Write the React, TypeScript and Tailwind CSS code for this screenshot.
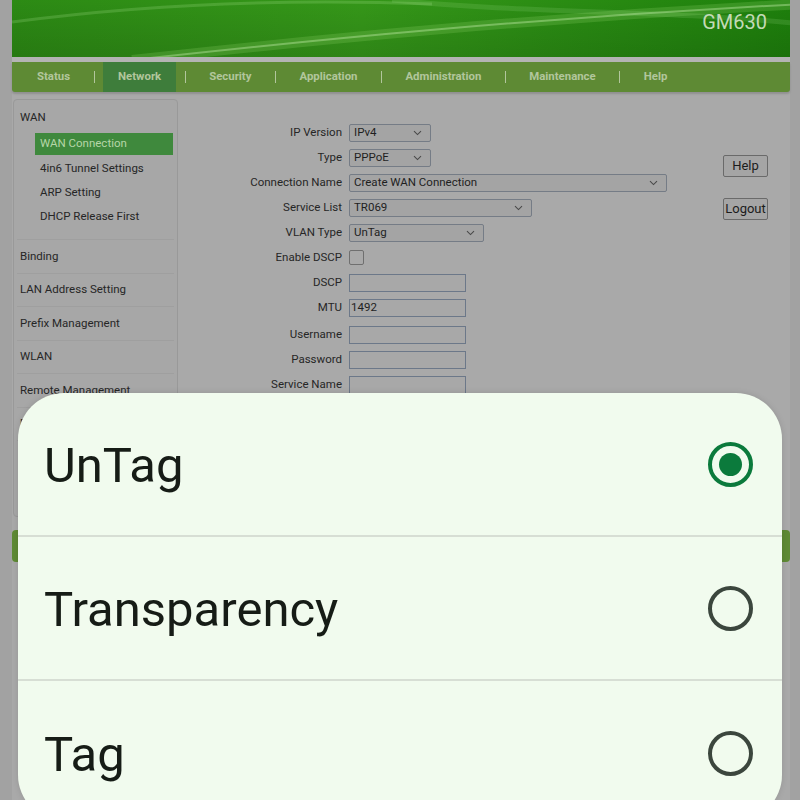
import React from 'react';

const navItems = ['Status', 'Network', 'Security', 'Application', 'Administration', 'Maintenance', 'Help'];

const sideGroups = ['Binding', 'LAN Address Setting', 'Prefix Management', 'WLAN', 'Remote Management', 'Diagnosis'];

const vlanOptions = ['UnTag', 'Transparency', 'Tag'];

function Chevron() {
  return (
    <svg width="9" height="6" viewBox="0 0 9 6" className="shrink-0">
      <path d="M1 1.2 L4.5 4.6 L8 1.2" fill="none" stroke="#4a4a4a" strokeWidth="1.1" />
    </svg>
  );
}

function Select({ value, width }: { value: string; width: string }) {
  return (
    <div className={`flex h-[18px] items-center justify-between rounded-[2px] border border-[#757c86] bg-[#a4a4a4] pl-[4px] pr-[8px] text-[11.5px] text-[#1f1f1f] ${width}`}>
      <span>{value}</span>
      <Chevron />
    </div>
  );
}

function Input({ value }: { value?: string }) {
  return (
    <div className="flex h-[18px] w-[117px] items-center border border-[#6c7889] bg-[#a8a8a8] pl-[1px] text-[11.5px] text-[#1f1f1f]">
      {value}
    </div>
  );
}

function Row({ label, children, extra }: { label: string; children: React.ReactNode; extra?: string }) {
  return (
    <div className={`flex h-[25px] items-center ${extra ?? ''}`}>
      <div className="w-[171px] pr-[7px] text-right text-[11.5px] text-[#262626]">{label}</div>
      {children}
    </div>
  );
}

function Radio({ checked }: { checked: boolean }) {
  return (
    <svg width="47" height="47" viewBox="0 0 47 47">
      <circle cx="23.5" cy="23.5" r="20.5" fill="none" stroke={checked ? '#0b7a3c' : '#3b463d'} strokeWidth="4" />
      {checked && <circle cx="23.5" cy="23.5" r="11.5" fill="#0b7a3c" />}
    </svg>
  );
}

export default function App() {
  return (
    <div className="relative h-[800px] w-[800px] overflow-hidden bg-[#a2a2a2] [font-family:Roboto,'Noto_Sans',sans-serif]">
      <div className="ml-[12px] flex h-full w-[778px] flex-col bg-[#a9a9a9]">
        {/* banner */}
        <div className="relative h-[57px] overflow-hidden">
          <svg width="778" height="57" viewBox="0 0 778 57" className="absolute inset-0">
            <defs>
              <linearGradient id="bg" x1="0" y1="0" x2="1" y2="0">
                <stop offset="0" stopColor="#2c8a14" />
                <stop offset="0.45" stopColor="#359719" />
                <stop offset="1" stopColor="#1e800c" />
              </linearGradient>
              <linearGradient id="shade" x1="0" y1="0" x2="0" y2="1">
                <stop offset="0" stopColor="#000" stopOpacity="0" />
                <stop offset="1" stopColor="#000" stopOpacity="0.12" />
              </linearGradient>
            </defs>
            <rect width="778" height="57" fill="url(#bg)" />
            <rect width="778" height="57" fill="url(#shade)" />
            <path d="M120 60 C 300 40, 520 18, 790 4" fill="none" stroke="#9ee07a" strokeOpacity="0.2" strokeWidth="10" />
            <path d="M120 60 C 300 40, 520 18, 790 4" fill="none" stroke="#c9f0b0" strokeOpacity="0.4" strokeWidth="2" />
            <path d="M0 22 C 120 6, 260 -2, 420 4" fill="none" stroke="#b8eea0" strokeOpacity="0.2" strokeWidth="3" />
            <path d="M380 0 C 520 14, 660 10, 790 24" fill="none" stroke="#b8eea0" strokeOpacity="0.14" strokeWidth="5" />
          </svg>
          <div className="absolute right-[23px] top-[7px] text-[20px] text-[#c3dab6]">GM630</div>
        </div>
        <div className="h-[5px] bg-[#b4b4b4]" />
        {/* nav */}
        <div className="flex h-[30px] items-stretch gap-[8.5px] rounded-b-[3px] bg-[#5e8a34] pl-[10px] text-[11.4px] font-bold text-[#b2c69c] shadow-[0_2px_2px_rgba(0,0,0,0.15)]">
          {navItems.map((item, i) => (
            <React.Fragment key={item}>
              {i > 0 && <div className="my-auto h-[12px] w-[1px] bg-[#b2c69c]" />}
              <div className={`flex items-center px-[15px] ${item === 'Network' ? 'bg-[#3e7d3b]' : ''}`}>{item}</div>
            </React.Fragment>
          ))}
        </div>

        {/* main */}
        <div className="flex pt-[7px]">
          <div className="ml-[1px] flex h-[418px] w-[165px] shrink-0 flex-col rounded-[4px] border border-[#999999] bg-[#a7a7a7] text-[11.5px] text-[#262626]">
            <div className="flex h-[33px] items-center pl-[6px] pt-[2px]">WAN</div>
            <div className="ml-[21px] mr-[4px] flex flex-col">
              <div className="flex h-[22px] items-center bg-[#3f893d] pl-[5px] text-[#b6d6a8]">WAN Connection</div>
              <div className="flex h-[26px] items-center pl-[5px] pt-[2px]">4in6 Tunnel Settings</div>
              <div className="flex h-[24px] items-center pl-[5px]">ARP Setting</div>
              <div className="flex h-[24px] items-center pl-[5px]">DHCP Release First</div>
            </div>
            <div className="mx-[3px] mt-[10px] border-t border-[#9f9f9f]" />
            {sideGroups.map((g) => (
              <div key={g} className="mx-[3px] flex h-[33.5px] items-center border-b border-[#9f9f9f] pl-[3px]">
                {g}
              </div>
            ))}
          </div>

          <div className="mt-[21px] flex flex-col">
            <Row label="IP Version">
              <Select value="IPv4" width="w-[82px]" />
            </Row>
            <Row label="Type">
              <Select value="PPPoE" width="w-[82px]" />
            </Row>
            <Row label="Connection Name">
              <Select value="Create WAN Connection" width="w-[318px]" />
            </Row>
            <Row label="Service List">
              <Select value="TR069" width="w-[183px]" />
            </Row>
            <Row label="VLAN Type">
              <Select value="UnTag" width="w-[135px]" />
            </Row>
            <Row label="Enable DSCP">
              <div className="h-[15px] w-[15px] rounded-[2px] border border-[#6f6f6f]" />
            </Row>
            <Row label="DSCP">
              <Input />
            </Row>
            <Row label="MTU">
              <Input value="1492" />
            </Row>
            <Row label="Username" extra="mt-[2px]">
              <Input />
            </Row>
            <Row label="Password">
              <Input />
            </Row>
            <Row label="Service Name">
              <Input />
            </Row>
          </div>

          <div className="ml-auto mr-[22px] mt-[56px] flex flex-col gap-[21px] text-[13px] text-[#1c1c1c]">
            <div className="flex h-[22px] w-[45px] items-center justify-center rounded-[2px] border border-[#6a6a6a] bg-[#a5a5a5]">Help</div>
            <div className="flex h-[22px] w-[45px] items-center justify-center rounded-[2px] border border-[#6a6a6a] bg-[#a5a5a5]">Logout</div>
          </div>
        </div>

        <div className="mt-[13px] h-[32px] rounded-[4px] bg-[#5e8a34]" />
      </div>

      {/* VLAN type picker */}
      <div className="absolute left-[18px] top-[393px] flex h-[428px] w-[764px] flex-col overflow-hidden rounded-[46px] bg-[#f1fbee] shadow-[0_0_6px_rgba(0,0,0,0.12)]">
        {vlanOptions.map((opt, i) => (
          <div
            key={opt}
            className={`flex h-[144px] shrink-0 items-center justify-between pl-[26px] pr-[28px] ${i < 2 ? 'border-b-2 border-[#d7ded4]' : ''}`}
          >
            <span className="pt-[3px] text-[49px] leading-none text-[#161c16]">{opt}</span>
            <Radio checked={i === 0} />
          </div>
        ))}
      </div>
    </div>
  );
}
